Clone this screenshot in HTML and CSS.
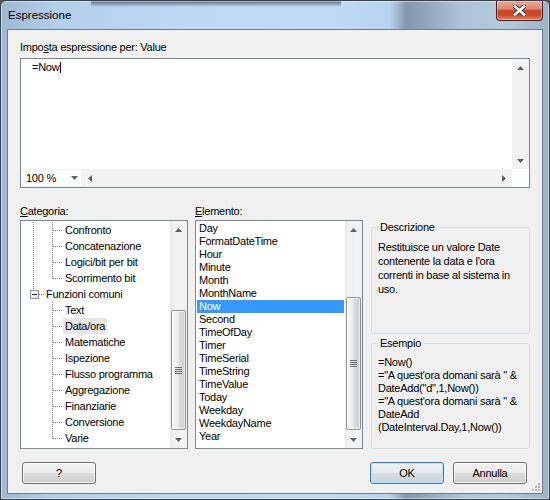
FILE: index.html
```html
<!DOCTYPE html>
<html lang="it">
<head>
<meta charset="utf-8">
<title>Espressione</title>
<link rel="stylesheet" href="styles.css">
</head>
<body>
<div class="window">
  <div class="titlebar">
    <span class="title">Espressione</span>
    <div class="close">
      <svg width="13" height="11" viewBox="0 0 13 11"><path d="M2 1.5L11 9.5M11 1.5L2 9.5" stroke="#3b3b3b" stroke-width="4.6" stroke-linecap="square"/><path d="M2 1.5L11 9.5M11 1.5L2 9.5" stroke="#fff" stroke-width="2.6" stroke-linecap="square"/></svg>
    </div>
  </div>
  <div class="client">
    <div class="lbl">Impo<u>s</u>ta espressione per: Value</div>
    <div class="editor">
      <div class="editor-main">
        <div class="code">=Now<span class="caret"></span></div>
        <div class="vscroll plain">
          <div class="sbtn"><svg class="ar" width="7" height="4" viewBox="0 0 7 4"><path d="M0 4L3.5 0L7 4Z"/></svg></div>
          <div class="sbtn"><svg class="ar" width="7" height="4" viewBox="0 0 7 4"><path d="M0 0L7 0L3.5 4Z"/></svg></div>
        </div>
      </div>
      <div class="editor-bottom">
        <div class="combo"><span>100 %</span><svg class="ar" width="7" height="4" viewBox="0 0 7 4"><path d="M0 0L7 0L3.5 4Z"/></svg></div>
        <div class="hscroll">
          <div class="hbtn"><svg class="ar lt" width="4" height="7" viewBox="0 0 4 7"><path d="M4 0L4 7L0 3.5Z"/></svg></div>
          <div class="hbtn"><svg class="ar" width="4" height="7" viewBox="0 0 4 7"><path d="M0 0L4 3.5L0 7Z"/></svg></div>
        </div>
        <div class="corner"></div>
      </div>
    </div>

    <div class="lower">
      <div class="lbl col1"><u>C</u>ategoria:</div>
      <div class="lbl col2"><u>E</u>lemento:</div>
      <div class="side">
        <fieldset class="grp g-desc">
          <legend>Descrizione</legend>
          <div class="desc">Restituisce un valore Date<br>contenente la data e l'ora<br>correnti in base al sistema in<br>uso.</div>
        </fieldset>
        <fieldset class="grp g-ex">
          <legend>Esempio</legend>
          <div class="ex">=Now()<br>="A quest'ora domani sarà " &amp;<br>DateAdd("d",1,Now())<br>="A quest'ora domani sarà " &amp;<br>DateAdd<br>(DateInterval.Day,1,Now())</div>
        </fieldset>
      </div>

      <div class="box tree col1">
        <div class="items">
          <div class="trow la lb"><span class="t">Confronto</span></div>
          <div class="trow la lb"><span class="t">Concatenazione</span></div>
          <div class="trow la lb"><span class="t">Logici/bit per bit</span></div>
          <div class="trow la lb-half"><span class="t">Scorrimento bit</span></div>
          <div class="trow parent"><span class="exp"></span><span class="t pt">Funzioni comuni</span></div>
          <div class="trow lb"><span class="t">Text</span></div>
          <div class="trow lb"><span class="t sel-gray">Data/ora</span></div>
          <div class="trow lb"><span class="t">Matematiche</span></div>
          <div class="trow lb"><span class="t">Ispezione</span></div>
          <div class="trow lb"><span class="t">Flusso programma</span></div>
          <div class="trow lb"><span class="t">Aggregazione</span></div>
          <div class="trow lb"><span class="t">Finanziarie</span></div>
          <div class="trow lb"><span class="t">Conversione</span></div>
          <div class="trow lb-half"><span class="t">Varie</span></div>
        </div>
        <div class="vscroll">
          <div class="sbtn"><svg class="ar" width="7" height="4" viewBox="0 0 7 4"><path d="M0 4L3.5 0L7 4Z"/></svg></div>
          <div class="track"><div class="thumb t-tree"><span class="grip"></span></div></div>
          <div class="sbtn"><svg class="ar" width="7" height="4" viewBox="0 0 7 4"><path d="M0 0L7 0L3.5 4Z"/></svg></div>
        </div>
      </div>

      <div class="box list col2">
        <div class="items">
          <div class="lrow">Day</div>
          <div class="lrow">FormatDateTime</div>
          <div class="lrow">Hour</div>
          <div class="lrow">Minute</div>
          <div class="lrow">Month</div>
          <div class="lrow">MonthName</div>
          <div class="lrow sel">Now</div>
          <div class="lrow">Second</div>
          <div class="lrow">TimeOfDay</div>
          <div class="lrow">Timer</div>
          <div class="lrow">TimeSerial</div>
          <div class="lrow">TimeString</div>
          <div class="lrow">TimeValue</div>
          <div class="lrow">Today</div>
          <div class="lrow">Weekday</div>
          <div class="lrow">WeekdayName</div>
          <div class="lrow">Year</div>
        </div>
        <div class="vscroll">
          <div class="sbtn"><svg class="ar" width="7" height="4" viewBox="0 0 7 4"><path d="M0 4L3.5 0L7 4Z"/></svg></div>
          <div class="track"><div class="thumb t-list"><span class="grip"></span></div></div>
          <div class="sbtn"><svg class="ar" width="7" height="4" viewBox="0 0 7 4"><path d="M0 0L7 0L3.5 4Z"/></svg></div>
        </div>
      </div>
    </div>

    <div class="buttons">
      <button class="btn">?</button>
      <span class="spacer"></span>
      <button class="btn default">OK</button>
      <button class="btn">Annulla</button>
    </div>

    <svg class="grip-resize" width="8" height="8" viewBox="0 0 8 8">
      <g fill="#b3b3b3"><rect x="6" y="0" width="2" height="2"/><rect x="3" y="3" width="2" height="2"/><rect x="6" y="3" width="2" height="2"/><rect x="0" y="6" width="2" height="2"/><rect x="3" y="6" width="2" height="2"/><rect x="6" y="6" width="2" height="2"/></g>
    </svg>
  </div>
</div>
</body>
</html>
```
FILE: styles.css
```css
:root {
  --dotv: repeating-linear-gradient(to bottom, #7a7a7a 0 1px, transparent 1px 2px);
  --doth: repeating-linear-gradient(to right, #7a7a7a 0 1px, transparent 1px 2px);
}
* { box-sizing: border-box; }
html, body {
  margin: 0;
  width: 550px;
  height: 500px;
  overflow: hidden;
  background: #5a5550;
}
body {
  font-family: "Liberation Sans", Arial, sans-serif;
  font-size: 11px;
  letter-spacing: -0.25px;
  color: #000;
}
u { text-decoration: underline; text-underline-offset: 1px; }

.window {
  width: 550px;
  height: 500px;
  border: 1px solid #34414f;
  border-radius: 6px 6px 2px 2px;
  padding: 0 6px 5px;
  display: flex;
  flex-direction: column;
  box-shadow: inset 0 0 0 1px rgba(255,255,255,0.45);
  background:
    linear-gradient(180deg, rgba(35,45,58,0.65) 0, rgba(35,45,58,0) 6px) 90px 0 / 250px 8px no-repeat,
    linear-gradient(90deg, #9fb9d4 0, #b4cfeb 10%, #bfd9f4 35%, #c1dbf5 60%, #b8d3ef 71%, #8296ad 74%, #8fa4ba 77%, #aec3d9 84%, #b5c9dd 92%, #9db3c9 100%);
}

.titlebar {
  height: 28px;
  display: flex;
  justify-content: space-between;
  align-items: flex-start;
}
.title {
  margin: 8px 0 0 1px;
  font-size: 11.5px;
  letter-spacing: 0;
  line-height: 13px;
  color: #000;
}
.close {
  width: 47px;
  height: 20px;
  border: 1px solid #4a1d17;
  border-top: none;
  border-radius: 0 0 4px 4px;
  display: flex;
  align-items: center;
  justify-content: center;
  background: linear-gradient(180deg, #e9ab9a 0, #dc8a76 40%, #c8442a 52%, #cc4a2e 75%, #e0876b 100%);
  box-shadow: inset 0 0 0 1px rgba(255,220,200,0.45);
}
.close svg { margin-top: -1px; }

.client {
  position: relative;
  flex: 1;
  border: 1px solid #6a7d92;
  background: #f0f0f0;
  padding: 11px 12px 0;
  display: flex;
  flex-direction: column;
}
.lbl { line-height: 13px; white-space: nowrap; }

.editor {
  margin-top: 4px;
  width: 510px;
  height: 130px;
  border: 1px solid #7f848c;
  background: #fff;
  display: flex;
  flex-direction: column;
}
.editor-main { flex: 1; display: flex; }
.code {
  flex: 1;
  padding: 2px 0 0 11px;
  line-height: 13px;
}
.caret {
  display: inline-block;
  width: 1px;
  height: 11px;
  background: #000;
  vertical-align: -2px;
  margin-left: 1px;
}
.vscroll {
  width: 17px;
  display: flex;
  flex-direction: column;
  background: linear-gradient(90deg, #e6e6e6 0, #f1f1f1 20%, #f4f4f4 80%, #ececec 100%);
}
.vscroll.plain { justify-content: space-between; background: #f2f2f2; }
.sbtn {
  height: 17px;
  display: flex;
  align-items: center;
  justify-content: center;
  flex: none;
}
.ar { display: block; fill: #606060; }
.track { flex: 1; display: flex; flex-direction: column; }
.thumb {
  margin: 0 1px;
  border: 1px solid #949494;
  border-radius: 2px;
  background: linear-gradient(90deg, #f6f6f6 0, #ececec 45%, #dcdcdc 55%, #cfcfcf 100%);
  box-shadow: inset 0 0 0 1px rgba(255,255,255,0.6);
  display: flex;
  align-items: center;
  justify-content: center;
}
.t-tree { margin-top: 72px; height: 120px; }
.t-list { margin-top: 59px; height: 133px; }
.grip {
  width: 7px;
  height: 7px;
  background: repeating-linear-gradient(180deg, #6c6c6c 0 1px, transparent 1px 2px);
}

.editor-bottom {
  height: 18px;
  display: flex;
  background: #f2f2f2;
}
.combo {
  margin: 1px 0 1px 1px;
  width: 59px;
  background: #fff;
  display: flex;
  align-items: center;
  justify-content: space-between;
  padding: 0 3px 0 4px;
  line-height: 13px;
}
.hscroll {
  flex: 1;
  display: flex;
  justify-content: space-between;
}
.hbtn {
  width: 17px;
  display: flex;
  align-items: center;
  justify-content: center;
}
.hbtn .lt { margin-left: 0; }
.corner { width: 17px; background: #fff; }

.lower {
  margin-top: 17px;
  display: grid;
  grid-template-columns: 168px 7px 168px 8px 159px;
  grid-template-rows: 15px 229px;
}
.col1 { grid-column: 1; }
.col2 { grid-column: 3; }
.lower > .lbl { grid-row: 1; }
.lower > .box { grid-row: 2; }
.side {
  grid-column: 5;
  grid-row: 1 / span 2;
  padding-top: 16px;
  display: flex;
  flex-direction: column;
}
.grp {
  margin: 0;
  min-width: 0;
  border: 1px solid #d5dfe5;
  border-radius: 3px;
  padding: 0 6px;
}
.grp legend { padding: 0 2px; line-height: 13px; }
.g-desc { height: 113px; }
.g-ex { height: 112px; margin-top: 3px; }
.desc { margin-top: 6px; line-height: 14px; white-space: nowrap; }
.ex { margin-top: 6px; line-height: 13px; white-space: nowrap; }

.box {
  border: 1px solid #828790;
  background: #fff;
  display: flex;
  overflow: hidden;
}
.items { flex: 1; padding-top: 1px; min-width: 0; }

.trow {
  height: 16px;
  display: flex;
  align-items: center;
  white-space: nowrap;
  background-image: var(--la, none), var(--lb, none), var(--lh, var(--doth));
  background-repeat: no-repeat;
  background-position: 12px 0, 31px 0, var(--hx, 32px) 8px;
  background-size: 1px var(--lah, 16px), 1px var(--lbh, 16px), var(--hw, 10px) 1px;
}
.trow.la { --la: var(--dotv); }
.trow.lb { --lb: var(--dotv); }
.trow.lb-half { --lb: var(--dotv); --lbh: 9px; }
.trow.la.lb-half { --la: var(--dotv); }
.trow.parent { --la: var(--dotv); --lah: 4px; --hx: 18px; --hw: 5px; }
.t {
  margin-left: 42px;
  padding: 0 2px;
  line-height: 16px;
}
.t.pt { margin-left: 5px; }
.exp {
  margin-left: 9px;
  width: 9px;
  height: 9px;
  border: 1px solid #919191;
  background:
    linear-gradient(#1f1f1f, #1f1f1f) center / 5px 1px no-repeat,
    linear-gradient(135deg, #ffffff 0, #f2f2f2 50%, #d8d8d8 100%);
}
.sel-gray { background: #e6e6e6; }

.lrow {
  height: 13px;
  line-height: 13px;
  margin: 0 1px;
  padding-left: 2px;
  white-space: nowrap;
}
.lrow.sel { background: #3399ff; color: #fff; }

.buttons {
  margin-top: 13px;
  display: flex;
  padding: 0 3px 0 2px;
  gap: 9px;
}
.spacer { flex: 1; }
.btn {
  width: 74px;
  height: 22px;
  margin: 0;
  padding: 0;
  font: inherit;
  letter-spacing: inherit;
  color: #000;
  border: 1px solid #707070;
  border-radius: 3px;
  background: linear-gradient(180deg, #f2f2f2 0, #ebebeb 48%, #dddddd 52%, #cfcfcf 100%);
  box-shadow: inset 0 0 0 1px rgba(255,255,255,0.75);
}
.btn.default {
  border-color: #3c7fb1;
  background: linear-gradient(180deg, #eef3f6 0, #e5ebef 48%, #d6dee4 52%, #c9d3da 100%);
  box-shadow: inset 0 0 0 1px #b9e3f7;
}
.grip-resize {
  position: absolute;
  right: 2px;
  bottom: 2px;
}
```
